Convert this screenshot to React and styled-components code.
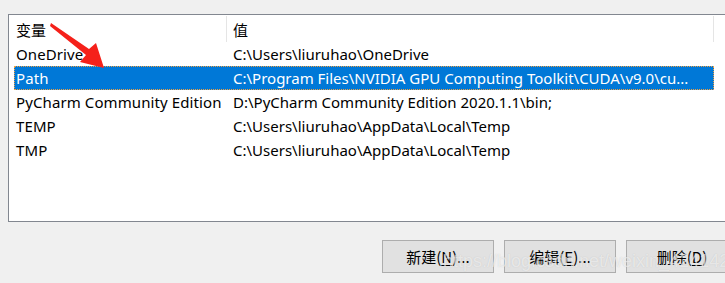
import React from "react";
import styled, { createGlobalStyle } from "styled-components";

const GlobalStyle = createGlobalStyle`
  html, body {
    margin: 0;
    padding: 0;
    background: #f0f0f0;
    overflow: hidden;
  }
  body {
    font-family: "Noto Sans", "Noto Sans CJK SC", sans-serif;
    font-size: 15px;
    color: #000;
  }
`;

const rows = [
  { name: "OneDrive", value: "C:\\Users\\liuruhao\\OneDrive" },
  {
    name: "Path",
    value: "C:\\Program Files\\NVIDIA GPU Computing Toolkit\\CUDA\\v9.0\\cu...",
    selected: true,
  },
  {
    name: "PyCharm Community Edition",
    value: "D:\\PyCharm Community Edition 2020.1.1\\bin;",
  },
  { name: "TEMP", value: "C:\\Users\\liuruhao\\AppData\\Local\\Temp" },
  { name: "TMP", value: "C:\\Users\\liuruhao\\AppData\\Local\\Temp" },
];

const App = () => {
  return (
    <Page>
      <GlobalStyle />
      <ListPanel>
        <Header>
          <HeaderCell $first>变量</HeaderCell>
          <HeaderCell>值</HeaderCell>
        </Header>
        <Rows>
          {rows.map((row) => (
            <Row key={row.name} $selected={row.selected}>
              <NameCell>{row.name}</NameCell>
              <ValueCell>{row.value}</ValueCell>
            </Row>
          ))}
        </Rows>
      </ListPanel>
      <ButtonBar>
        <Button>
          新建(<u>N</u>)...
        </Button>
        <Button>
          编辑(<u>E</u>)...
        </Button>
        <Button>
          删除(<u>D</u>)
        </Button>
      </ButtonBar>
      <Arrow width="120" height="80" viewBox="0 0 120 80">
        <polygon
          points="51,23 89,49 96,43 104,68 80,62 86,55 50,26"
          fill="#f5211a"
        />
      </Arrow>
      <Watermark>https://blog.csdn.net/weixin_42414244</Watermark>
    </Page>
  );
};

const Page = styled.div`
  position: relative;
  width: 725px;
  height: 283px;
  overflow: hidden;
  padding: 14px 0 0 8px;
  box-sizing: border-box;
`;

const ListPanel = styled.div`
  width: 760px;
  height: 208px;
  box-sizing: border-box;
  border: 1px solid #828790;
  background: #fff;
`;

const Header = styled.div`
  display: flex;
  height: 27px;
  align-items: stretch;
`;

const HeaderCell = styled.div`
  display: flex;
  align-items: center;
  box-sizing: border-box;
  width: ${(props) => (props.$first ? "218px" : "487px")};
  padding-left: ${(props) => (props.$first ? "7px" : "6px")};
  padding-top: 1px;
  border-right: 1px solid #e5e5e5;
  margin: 1px 0 0;
  font-family: "Noto Sans CJK SC", sans-serif;
`;

const Rows = styled.div`
  padding-left: 5px;
`;

const Row = styled.div`
  display: flex;
  align-items: center;
  width: 700px;
  height: 24px;
  box-sizing: border-box;
  background: ${(props) => (props.$selected ? "#0078d7" : "transparent")};
  color: ${(props) => (props.$selected ? "#fff" : "#000")};
  outline: ${(props) => (props.$selected ? "1px dotted #f0a040" : "none")};
  outline-offset: -1px;
`;

const NameCell = styled.div`
  width: 219px;
  padding-left: 2px;
  box-sizing: border-box;
  white-space: nowrap;
  overflow: hidden;
  letter-spacing: 0.1px;
`;

const ValueCell = styled.div`
  flex: 1;
  white-space: nowrap;
  overflow: hidden;
`;

const ButtonBar = styled.div`
  display: flex;
  gap: 10px;
  margin-top: 18px;
  padding-left: 374px;
`;

const Button = styled.button`
  width: 112px;
  height: 33px;
  flex-shrink: 0;
  box-sizing: border-box;
  border: 1px solid #adadad;
  background: #e1e1e1;
  font-family: "Noto Sans CJK SC", sans-serif;
  font-size: 15px;
  color: #000;
  padding: 0;

  u {
    text-underline-offset: 2px;
  }
`;

const Arrow = styled.svg`
  position: absolute;
  left: 0;
  top: 0;
`;

const Watermark = styled.div`
  position: absolute;
  left: 443px;
  top: 251px;
  font-family: "Liberation Sans", sans-serif;
  font-size: 18px;
  color: rgba(255, 255, 255, 0.6);
  text-shadow: 0 0 1px rgba(120, 120, 120, 0.3);
  white-space: nowrap;
  pointer-events: none;
`;

export default App;
